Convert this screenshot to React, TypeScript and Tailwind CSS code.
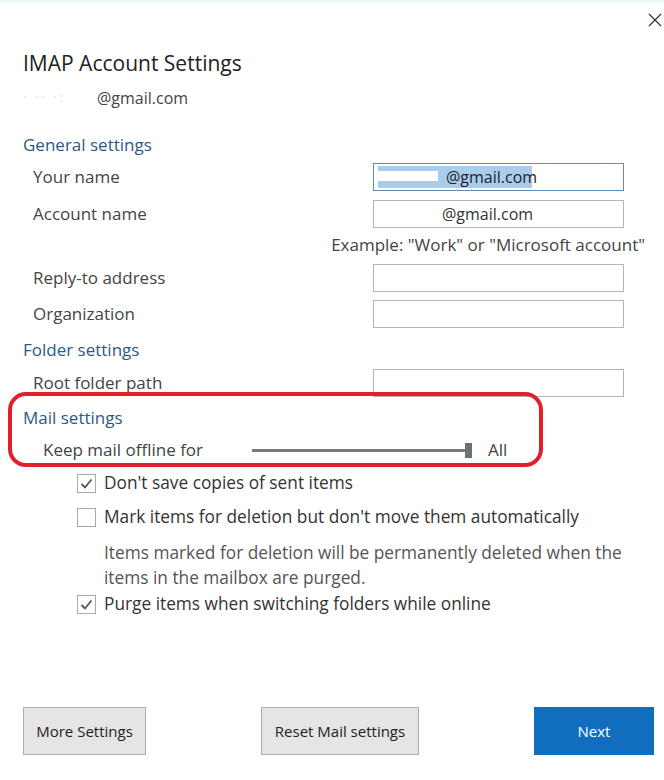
import React from 'react';

const Label: React.FC<{ text: string }> = ({ text }) => (
  <span className="pl-[10px] text-[17px] text-[#444]">{text}</span>
);

const FieldRow: React.FC<{ label: string; children?: React.ReactNode; focused?: boolean; className?: string }> = ({
  label,
  children,
  focused,
  className,
}) => (
  <div className={'flex items-center justify-between h-[28px] ' + (className ?? '')}>
    <Label text={label} />
    <div
      className={
        'mr-[40px] w-[251px] h-[28px] flex items-center bg-white border ' +
        (focused ? 'border-[#5a8db8]' : 'border-[#b4b4b4]')
      }
    >
      {children}
    </div>
  </div>
);

const Heading: React.FC<{ text: string; className?: string }> = ({ text, className }) => (
  <div className={'h-[26px] flex items-center text-[17px] text-[#2a5a88] ' + (className ?? '')}>{text}</div>
);

const Check: React.FC<{ checked: boolean }> = ({ checked }) => (
  <div className="w-[19px] h-[19px] border border-[#a8a8a8] bg-white flex items-center justify-center shrink-0">
    {checked && (
      <svg width="13" height="13" viewBox="0 0 13 13">
        <polyline points="1.5,7 5,10.5 11.5,2.5" fill="none" stroke="#555" strokeWidth="1.8" />
      </svg>
    )}
  </div>
);

const CheckRow: React.FC<{ checked: boolean; text: string; className?: string }> = ({ checked, text, className }) => (
  <div className={'flex items-center h-[26px] pl-[77px] gap-[8px] ' + (className ?? '')}>
    <Check checked={checked} />
    <span className="text-[17.3px] text-[#333]">{text}</span>
  </div>
);

export default function App() {
  return (
    <div className="w-[664px] h-[780px] bg-white border-t-[3px] border-[#eef7fb] font-['Open_Sans',sans-serif] flex flex-col pl-[23px] overflow-hidden">
      <div className="h-[37px] flex justify-end items-start pt-[10px] pr-[2px]">
        <svg width="14" height="14" viewBox="0 0 14 14">
          <path d="M1 1 L13 13 M13 1 L1 13" stroke="#333" strokeWidth="1.3" fill="none" />
        </svg>
      </div>
      <div className="h-[48px] flex items-center text-[21px] text-[#222]">IMAP Account Settings</div>
      <div className="h-[20px] flex items-center text-[16px] text-[#444]">
        <span className="w-[74px] text-[#d8d8d8] tracking-[3px] text-[12px]">·  ··  ·:</span>
        <span>@gmail.com</span>
      </div>

      <Heading text="General settings" className="mt-[24px]" />
      <FieldRow label="Your name" focused className="mt-[5px]">
        <div className="ml-[4px] h-[22px] w-[154px] bg-[#a9cdee] flex items-center relative">
          <div className="absolute left-0 top-[5px] w-[60px] h-[10px] bg-white" />
          <span className="ml-[68px] text-[16px] text-[#222] relative">@gmail.com</span>
        </div>
      </FieldRow>
      <FieldRow label="Account name" className="mt-[9px]">
        <span className="ml-[68px] text-[16px] text-[#333]">@gmail.com</span>
      </FieldRow>
      <div className="h-[22px] mt-[6px] flex items-center justify-end pr-[19px] text-[17px] text-[#444]">
        Example: "Work" or "Microsoft account"
      </div>
      <FieldRow label="Reply-to address" className="mt-[8px]" />
      <FieldRow label="Organization" className="mt-[8px]" />

      <Heading text="Folder settings" className="mt-[9px]" />
      <FieldRow label="Root folder path" className="mt-[6px]" />

      <div className="relative mt-[8px]">
        <div className="absolute left-[-15px] top-[-13px] w-[535px] h-[75px] border-[4px] border-[#e21f2b] rounded-[18px]" />
        <Heading text="Mail settings" />
        <div className="h-[28px] mt-[5px] flex items-center">
          <span className="pl-[20px] w-[229px] text-[17px] text-[#444]">Keep mail offline for</span>
          <div className="w-[220px] h-[16px] flex items-center">
            <div className="flex-1 h-[3px] bg-[#7a7a7a]" />
            <div className="w-[7px] h-[15px] bg-[#707070]" />
          </div>
          <span className="ml-[16px] text-[17px] text-[#444]">All</span>
        </div>
      </div>

      <CheckRow checked text="Don't save copies of sent items" className="mt-[6px] -ml-[23px]" />
      <CheckRow checked={false} text="Mark items for deletion but don't move them automatically" className="mt-[8px] -ml-[23px]" />
      <div className="mt-[10px] ml-[81px] w-[545px] text-[17.3px] leading-[25px] text-[#555]">
        Items marked for deletion will be permanently deleted when the items in the mailbox are purged.
      </div>
      <CheckRow checked text="Purge items when switching folders while online" className="mt-[1px] -ml-[23px]" />

      <div className="mt-[90px] flex items-center pr-[10px]">
        <button className="w-[123px] h-[48px] bg-[#e5e5e5] border border-[#adadad] text-[15px] text-[#222]">
          More Settings
        </button>
        <button className="ml-[115px] w-[158px] h-[48px] bg-[#e5e5e5] border border-[#adadad] text-[15px] text-[#222]">
          Reset Mail settings
        </button>
        <button className="ml-auto w-[120px] h-[48px] bg-[#116ebf] text-[15px] text-white">Next</button>
      </div>
    </div>
  );
}
